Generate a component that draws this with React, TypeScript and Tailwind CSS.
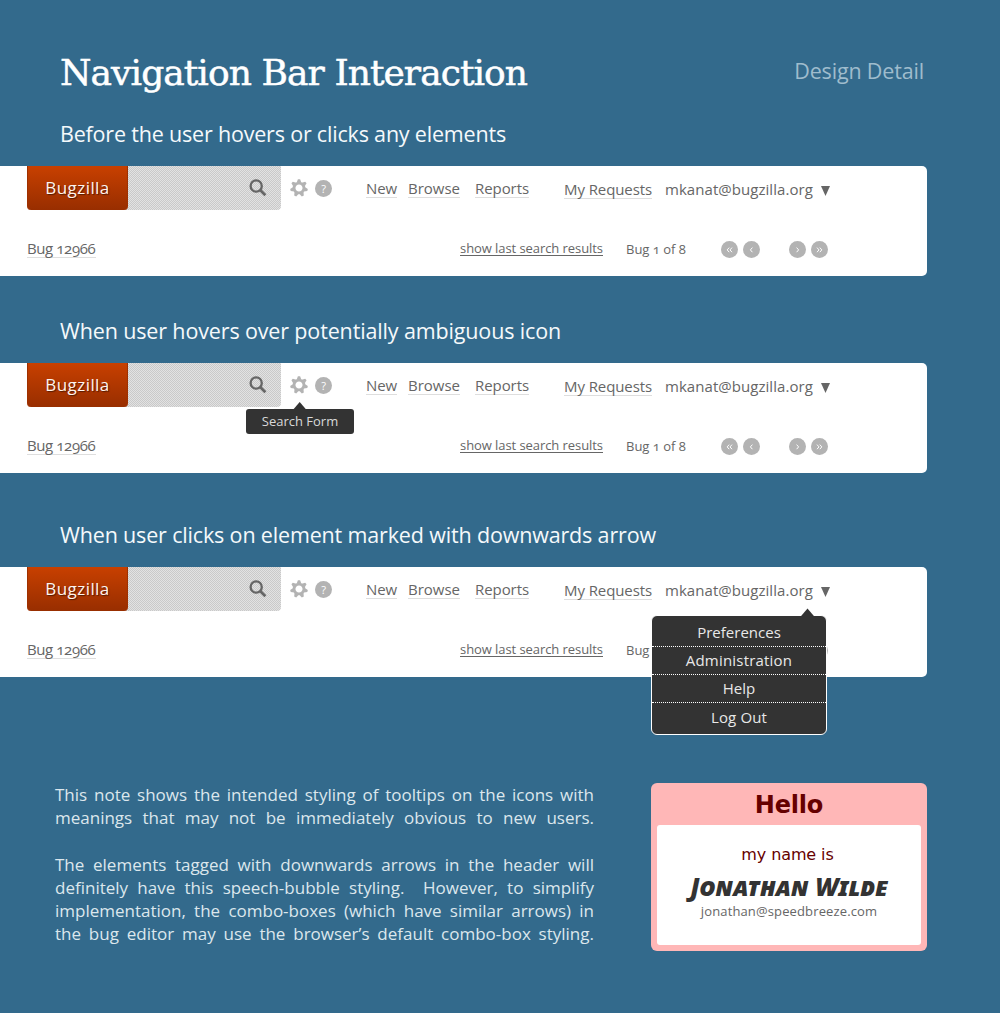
import type { ReactNode } from "react";

const SANS = "font-['Open_Sans','Noto_Sans',sans-serif]";

function SearchIcon() {
  return (
    <svg width="18" height="18" viewBox="0 0 18 18" fill="none" stroke="#666" className="block">
      <circle cx="7.2" cy="7" r="5.6" strokeWidth="2.3" />
      <path d="M11.1 11 16.4 16.3" strokeWidth="2.8" />
    </svg>
  );
}

const TEETH = [0, 1, 2, 3, 4, 5, 6];

function GearIcon() {
  return (
    <svg width="18" height="18" viewBox="-9 -9 18 18" className="block">
      <circle r="4.9" fill="none" stroke="#b3b3b3" strokeWidth="2.7" />
      {TEETH.map((n) => (
        <path key={n} d="M-2.3 -5.4 L-1.1 -8.8 H1.1 L2.3 -5.4Z" fill="#b3b3b3" transform={`rotate(${(n * 360) / 7})`} />
      ))}
    </svg>
  );
}

function Dot({ children, className = "" }: { children: ReactNode; className?: string }) {
  return (
    <span className={`flex h-[17px] w-[17px] shrink-0 items-center justify-center rounded-full bg-[#b3b3b3] text-white ${className}`}>
      {children}
    </span>
  );
}

function Chevrons({ left, double }: { left?: boolean; double?: boolean }) {
  return (
    <svg width="7" height="7" viewBox="0 0 7 7" fill="none" stroke="white" strokeWidth="1" className={left ? "-scale-x-100" : ""}>
      {double ? <path d="M1 1.6 3 3.9 1 6.2M3.8 1.6 5.8 3.9 3.8 6.2" /> : <path d="M2.6 1.6 4.6 3.9 2.6 6.2" />}
    </svg>
  );
}

function NavLink({ children, className = "" }: { children: ReactNode; className?: string }) {
  return (
    <a className={`h-[20px] shrink-0 border-b border-[#dedede] text-[15px] leading-[21px] whitespace-nowrap ${className}`}>{children}</a>
  );
}

function Tooltip() {
  return (
    <div className="absolute top-[46px] left-[246px] flex h-[25px] w-[108px] items-center justify-center rounded-[3px] bg-[#333] text-[13px] text-[#d9d9d9]">
      <svg width="14" height="7" viewBox="0 0 14 7" className="absolute -top-[7px] left-[47px]">
        <path d="M6.7 0 12.7 7H0.7Z" fill="#333" />
      </svg>
      Search Form
    </div>
  );
}

function UserMenu() {
  const row = "border-b border-dotted border-white";
  return (
    <div className="absolute top-[48px] left-[651px] w-[176px] rounded-[6px] border border-white bg-[#333] text-center text-[15px] text-[#e8e8e8]">
      <svg width="14" height="8" viewBox="0 0 14 8" className="absolute -top-[8px] left-[148px]">
        <path d="M7.5 0.5 13.9 8H1.1Z" fill="#333" />
      </svg>
      <div className={`h-[31px] leading-[32px] ${row}`}>Preferences</div>
      <div className={`h-[28px] leading-[27px] tracking-[0.2px] ${row}`}>Administration</div>
      <div className={`h-[28px] leading-[27px] ${row}`}>Help</div>
      <div className="h-[31px] leading-[29px] tracking-[0.15px]">Log Out</div>
    </div>
  );
}

function NavBar({ overlay }: { overlay?: ReactNode }) {
  return (
    <div className="relative h-[110px] w-[927px] rounded-r-[5px] bg-white text-[#666]">
      <div className="flex h-[44px] items-start pl-[27px]">
        <div className="relative flex h-[44px] w-[101px] shrink-0 items-center justify-center rounded-b-[4px] border-x border-[#9e3000] bg-linear-to-b from-[#c84000] to-[#982e00] text-[17px] tracking-[0.45px] text-[#fff4ee] [text-shadow:1px_1px_1px_rgba(0,0,0,0.5)]">
          Bugzilla
        </div>
        <div className="-ml-1 flex h-[44px] w-[157px] shrink-0 justify-end rounded-br-[4px] bg-[repeating-conic-gradient(#c9c9c9_0_25%,#e2e2e2_0_50%)] bg-size-[2px_2px] pt-[13px] pr-[14px]">
          <SearchIcon />
        </div>
        <div className="mt-[13px] ml-[9px] shrink-0">
          <GearIcon />
        </div>
        <Dot className="mt-[14px] ml-[7px] text-[11px] leading-none">?</Dot>
        <NavLink className="mt-[12px] ml-[34px] w-[31px] tracking-[-0.1px]">New</NavLink>
        <NavLink className="mt-[12px] ml-[11px] w-[52px]">Browse</NavLink>
        <NavLink className="mt-[12px] ml-[15px] w-[54px] tracking-[-0.07px]">Reports</NavLink>
        <NavLink className="mt-[13px] ml-[35px] w-[88px] tracking-[-0.09px]">My Requests</NavLink>
        <span className="mt-[13px] ml-[13px] w-[148px] text-[15px] leading-[21px] tracking-[0.05px] whitespace-nowrap">mkanat@bugzilla.org</span>
        <svg width="9" height="10" viewBox="0 0 9 10" className="mt-[20px] ml-[7.5px] block shrink-0">
          <path d="M0 0H9L4.5 10Z" fill="#666" />
        </svg>
      </div>
      <div className="flex items-start pt-[28px] pl-[27px]">
        <NavLink className="w-[69px] tracking-[-0.4px] oldstyle-nums">Bug 12966</NavLink>
        <a className="ml-[364px] h-[18px] w-[143px] border-b border-[#666] text-[13px] leading-[21px] tracking-[-0.07px] whitespace-nowrap">show last search results</a>
        <span className="ml-[23px] w-[60px] text-[13px] leading-[22px] whitespace-nowrap oldstyle-nums">Bug 1 of 8</span>
        <Dot className="mt-[3px] ml-[35px]"><Chevrons left double /></Dot>
        <Dot className="mt-[3px] ml-[5px]"><Chevrons left /></Dot>
        <Dot className="mt-[3px] ml-[29px]"><Chevrons /></Dot>
        <Dot className="mt-[3px] ml-[5px]"><Chevrons double /></Dot>
      </div>
      {overlay}
    </div>
  );
}

function Caption({ children, className = "" }: { children: ReactNode; className?: string }) {
  return <h2 className={`pl-[60px] text-[21.5px] leading-[30px] font-normal whitespace-nowrap text-[#f5f9fb] ${className}`}>{children}</h2>;
}

const NOTE = [
  "This note shows the intended styling of tooltips on the icons with",
  "meanings that may not be immediately obvious to new users.",
  "",
  "The elements tagged with downwards arrows in the header will",
  "definitely have this speech-bubble styling. \u00a0However, to simplify",
  "implementation, the combo-boxes (which have similar arrows) in",
  "the bug editor may use the browser’s default combo-box styling.",
];

export default function App() {
  return (
    <main className={`h-[1013px] w-[1000px] overflow-hidden bg-[#336a8c] font-normal ${SANS}`}>
      <header className="flex items-start justify-between pt-[51px] pr-[76px] pl-[60px]">
        <h1 className="font-['DejaVu_Serif',serif] text-[36px] leading-[44px] font-normal tracking-[-0.92px] whitespace-nowrap text-white [-webkit-text-stroke:0.5px_white]">
          Navigation Bar Interaction
        </h1>
        <p className="mt-[5px] text-[21.5px] leading-[30px] tracking-[-0.17px] text-[#9fbccd]">Design Detail</p>
      </header>
      <Caption className="mt-[24px] tracking-[-0.19px]">Before the user hovers or clicks any elements</Caption>
      <div className="mt-[17px]">
        <NavBar />
      </div>
      <Caption className="mt-[40px] tracking-[-0.14px]">When user hovers over potentially ambiguous icon</Caption>
      <div className="mt-[17px]">
        <NavBar overlay={<Tooltip />} />
      </div>
      <Caption className="mt-[47px] tracking-[-0.16px]">When user clicks on element marked with downwards arrow</Caption>
      <div className="mt-[17px]">
        <NavBar overlay={<UserMenu />} />
      </div>
      <section className="flex items-start pt-[106px] pl-[55px]">
        <div className="w-[539px] text-[17px] leading-[23.2px] text-[#dce7ed]">
          {NOTE.map((line, i) => (
            <p key={i} className="h-[23.2px] whitespace-nowrap [text-align-last:justify]">{line}</p>
          ))}
        </div>
        <div className="ml-[57px] h-[168px] w-[276px] rounded-[6px] bg-[#ffb7b7] px-[6px] text-center">
          <div className="h-[42px] font-['DejaVu_Sans',sans-serif] text-[24px] leading-[44px] font-bold tracking-[-0.2px] text-[#660000]">Hello</div>
          <div className="h-[120px] rounded-[3px] bg-white pt-[19px]">
            <div className="pr-[3px] font-['DejaVu_Sans',sans-serif] text-[16px] leading-[22px] font-normal tracking-[-0.1px] text-[#660000]">my name is</div>
            <div className="mt-[5px] font-['Noto_Sans',sans-serif] text-[25px] leading-[30px] font-black whitespace-nowrap text-[#333] italic [font-variant-caps:small-caps]">Jonathan Wilde</div>
            <div className="mt-px text-[13px] leading-[18px] font-normal tracking-[0.13px] text-[#666]">jonathan@speedbreeze.com</div>
          </div>
        </div>
      </section>
    </main>
  );
}
